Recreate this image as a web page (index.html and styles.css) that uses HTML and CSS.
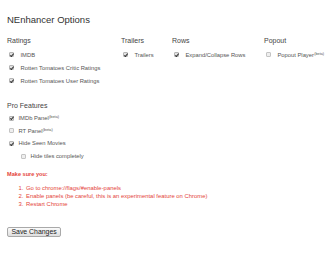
FILE: index.html
```html
<!DOCTYPE html>
<html lang="en">
<head>
    <meta charset="UTF-8">
    <title>NEnhancer Options</title>
    <link rel="stylesheet" href="styles.css">
</head>
<body>
    <div class="page">
        <h1>NEnhancer Options</h1>

        <div class="groups">
            <div class="group">
                <h2>Ratings</h2>
                <label class="opt"><input type="checkbox" checked><span>IMDB</span></label>
                <label class="opt"><input type="checkbox" checked><span>Rotten Tomatoes Critic Ratings</span></label>
                <label class="opt"><input type="checkbox" checked><span>Rotten Tomatoes User Ratings</span></label>
            </div>
            <div class="group">
                <h2>Trailers</h2>
                <label class="opt"><input type="checkbox" checked><span>Trailers</span></label>
            </div>
            <div class="group">
                <h2>Rows</h2>
                <label class="opt"><input type="checkbox" checked><span>Expand/Collapse Rows</span></label>
            </div>
            <div class="group">
                <h2>Popout</h2>
                <label class="opt"><input type="checkbox"><span>Popout Player<sup>(beta)</sup></span></label>
            </div>
        </div>

        <div class="pro">
            <h2>Pro Features</h2>
            <label class="opt"><input type="checkbox" checked><span>IMDb Panel<sup>(beta)</sup></span></label>
            <label class="opt"><input type="checkbox"><span>RT Panel<sup>(beta)</sup></span></label>
            <label class="opt"><input type="checkbox" checked><span>Hide Seen Movies</span></label>
            <label class="opt sub"><input type="checkbox"><span>Hide tiles completely</span></label>
        </div>

        <div class="notice">
            <p>Make sure you:</p>
            <ol>
                <li>Go to chrome://flags/#enable-panels</li>
                <li>Enable panels (be careful, this is an experimental feature on Chrome)</li>
                <li>Restart Chrome</li>
            </ol>
        </div>

        <button>Save Changes</button>
    </div>
</body>
</html>
```

FILE: styles.css
```css
body {
    margin: 0;
    font-family: 'Liberation Sans', Arial, sans-serif;
    color: #444;
    background: #fff;
}

.page {
    padding: 14px 7px;
}

h1 {
    margin: 0;
    font-size: 9.5px;
    line-height: 11px;
    font-weight: normal;
    color: #333;
}

h2 {
    margin: 0 0 3.6px;
    font-size: 7px;
    line-height: 8px;
    font-weight: normal;
    color: #444;
}

.groups {
    display: grid;
    grid-template-columns: 114px 51px 92px auto;
    margin-top: 12px;
}

.opt {
    display: flex;
    align-items: center;
    gap: 7px;
    height: 12.8px;
    font-size: 5.8px;
    color: #555;
    white-space: nowrap;
}

.opt sup {
    font-size: 3.8px;
    vertical-align: 2px;
    line-height: 0;
    margin-left: 0.3px;
}

.pro {
    margin-top: 14.6px;
}

.pro h2 {
    margin-bottom: 2.4px;
}

.pro .opt {
    gap: 5px;
    height: 12.6px;
}

.pro .opt.sub {
    padding-left: 12px;
}

input[type="checkbox"] {
    appearance: none;
    -webkit-appearance: none;
    position: relative;
    width: 5px;
    height: 5px;
    margin: 0 0 0 1.5px;
    border: 1px solid #c4c4c4;
    border-radius: 1px;
    background: #eee;
    flex: none;
}

input[type="checkbox"]:checked {
    background: #e2e2e2;
    border-color: #b5b5b5;
}

input[type="checkbox"]:checked::after {
    content: "";
    position: absolute;
    left: 1.2px;
    top: -0.4px;
    width: 1.3px;
    height: 2.8px;
    border-right: 1px solid #333;
    border-bottom: 1px solid #333;
    transform: rotate(40deg);
}

.notice {
    margin-top: 8px;
    color: #e4443a;
    font-size: 5.9px;
}

.notice p {
    margin: 0;
    line-height: 8px;
    font-weight: bold;
    font-size: 5.6px;
}

.notice ol {
    margin: 5.4px 0 0;
    padding-left: 18px;
}

.notice li {
    line-height: 8px;
    padding-left: 1px;
}

button {
    display: block;
    margin-top: 19px;
    height: 10.5px;
    padding: 0 3.5px;
    font-family: 'Liberation Sans', Arial, sans-serif;
    font-size: 6.9px;
    line-height: 8px;
    color: #222;
    border: 1px solid #a9a9a9;
    border-radius: 2px;
    background: linear-gradient(#fafafa, #dedede);
}
```
